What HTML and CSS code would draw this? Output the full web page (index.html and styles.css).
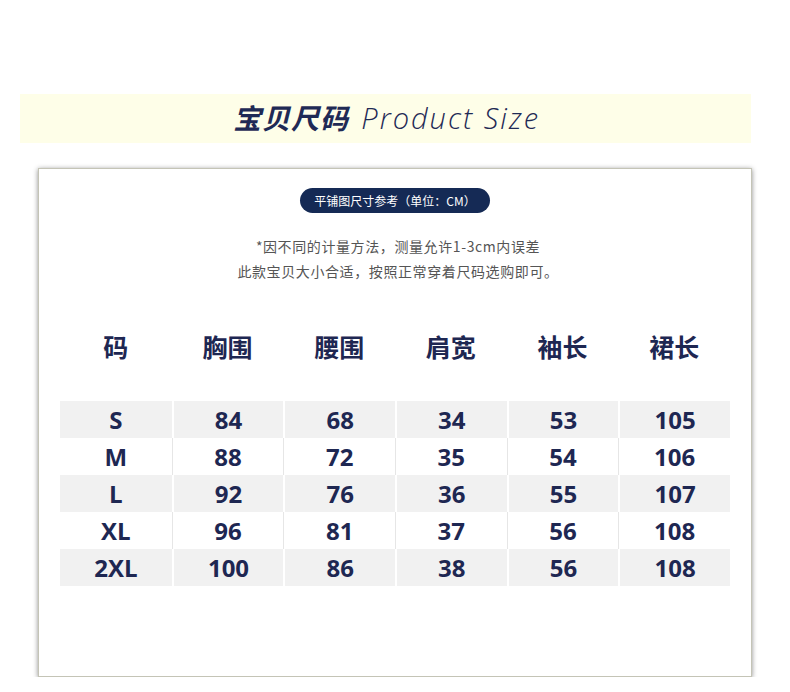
FILE: index.html
```html
<!DOCTYPE html>
<html lang="zh">
<head>
<meta charset="utf-8">
<title>宝贝尺码 Product Size</title>
<link rel="stylesheet" href="styles.css">
</head>
<body>
<div class="banner">
  <h1 class="title"><span class="title-cn">宝贝尺码</span> <span class="title-en">Product Size</span></h1>
</div>
<div class="card">
  <div class="pill-wrap"><span class="pill">平铺图尺寸参考（单位：CM）</span></div>
  <p class="note">*因不同的计量方法，测量允许1-3cm内误差<br>此款宝贝大小合适，按照正常穿着尺码选购即可。</p>
  <div class="table">
    <div class="row head"><div>码</div><div>胸围</div><div>腰围</div><div>肩宽</div><div>袖长</div><div>裙长</div></div>
    <div class="row odd"><div>S</div><div>84</div><div>68</div><div>34</div><div>53</div><div>105</div></div>
    <div class="row even"><div>M</div><div>88</div><div>72</div><div>35</div><div>54</div><div>106</div></div>
    <div class="row odd"><div>L</div><div>92</div><div>76</div><div>36</div><div>55</div><div>107</div></div>
    <div class="row even"><div>XL</div><div>96</div><div>81</div><div>37</div><div>56</div><div>108</div></div>
    <div class="row odd"><div>2XL</div><div>100</div><div>86</div><div>38</div><div>56</div><div>108</div></div>
  </div>
</div>
</body>
</html>
```

FILE: styles.css
```css
* { box-sizing: border-box; }
body {
  margin: 0;
  background: #fff;
  font-family: "Open Sans", "Noto Sans CJK SC", sans-serif;
  color: #1e2752;
}
.banner {
  margin: 94px 0 0 20px;
  width: 731px;
  height: 49px;
  background: #fefee8;
  display: flex;
  align-items: center;
  justify-content: center;
}
.title {
  margin: -4px 0 0 2px;
  font-weight: normal;
  line-height: 1;
  white-space: nowrap;
  color: #1f2a55;
}
.title-cn {
  font-family: "Noto Sans CJK SC", sans-serif;
  font-weight: 700;
  font-style: italic;
  font-size: 28px;
  letter-spacing: 1px;
}
.title-en {
  margin-left: 4px;
  font-family: "Open Sans", sans-serif;
  font-weight: 300;
  font-style: italic;
  font-size: 29px;
  letter-spacing: 2px;
}
.card {
  margin: 25px 0 0 38px;
  width: 714px;
  height: 509px;
  background: #fff;
  border: 1px solid #c4c4b6;
  box-shadow: 0 1px 5px rgba(0,0,0,0.45);
  padding: 19px 21px 0;
}
.pill-wrap {
  display: flex;
  justify-content: center;
}
.pill {
  display: inline-block;
  height: 25px;
  line-height: 25px;
  padding: 0 14px;
  border-radius: 13px;
  background: #152a55;
  color: #fff;
  font-family: "Noto Sans CJK SC", sans-serif;
  font-size: 12px;
}
.note {
  margin: 21px 0 0;
  text-align: center;
  font-family: "Noto Sans CJK SC", sans-serif;
  font-size: 14px;
  letter-spacing: 0.6px;
  line-height: 25px;
  color: #555;
  padding-left: 6px;
}
.table {
  margin-top: 32px;
  width: 670px;
}
.row {
  display: grid;
  grid-template-columns: repeat(6, 1fr);
  height: 37px;
}
.row > div {
  display: flex;
  align-items: center;
  justify-content: center;
  font-weight: 700;
  font-size: 24px;
}
.row.head {
  height: 60px;
  margin-bottom: 25px;
}
.row.head > div {
  font-family: "Noto Sans CJK SC", sans-serif;
  font-size: 25px;
}
.row.odd > div { background: #f1f1f1; }
.row.odd > div + div { border-left: 2px solid #fff; }
.row.even > div + div { border-left: 1px solid #e6e6e6; }
```
